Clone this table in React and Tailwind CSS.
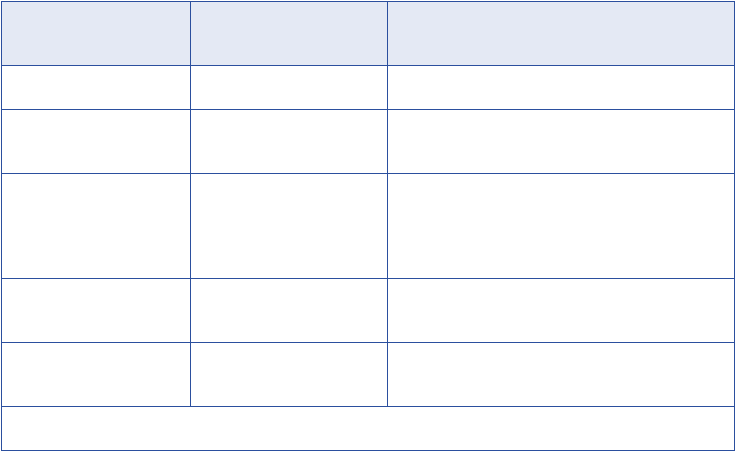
import React from "react";

const rows = [
  { h: "h-[64px]", header: true },
  { h: "h-[44px]" },
  { h: "h-[64px]" },
  { h: "h-[105px]" },
  { h: "h-[64px]" },
  { h: "h-[64px]" },
];

export default function App() {
  return (
    <div className="bg-white min-h-[451px] font-['Liberation_Sans',sans-serif]">
      <div className="ml-px mt-px w-[734px] border border-[#2b4f9e]">
        {rows.map((r, i) => (
          <div
            key={i}
            className={`flex border-b border-[#2b4f9e] ${r.h} ${r.header ? "bg-[#e4e9f4]" : "bg-white"}`}
          >
            <div className="w-[189px] border-r border-[#2b4f9e]" />
            <div className="w-[197px] border-r border-[#2b4f9e]" />
            <div className="flex-1" />
          </div>
        ))}
        {/* footer row spans all columns */}
        <div className="h-[43px] bg-white" />
      </div>
    </div>
  );
}
